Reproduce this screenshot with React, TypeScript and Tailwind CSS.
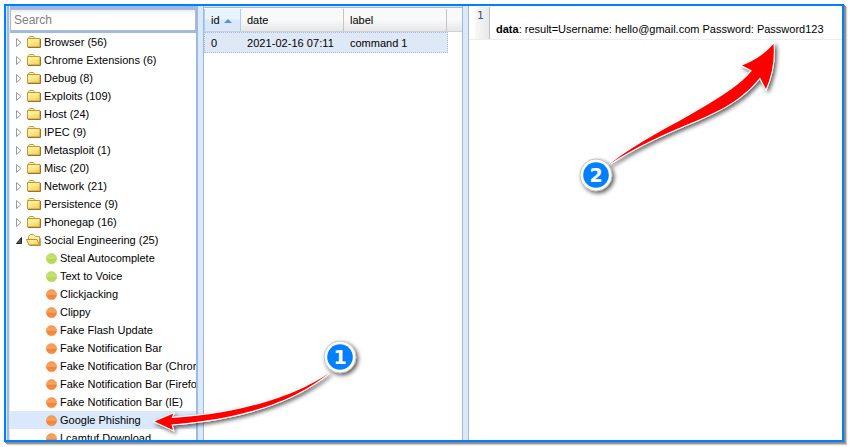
const folders = [
  "Browser (56)",
  "Chrome Extensions (6)",
  "Debug (8)",
  "Exploits (109)",
  "Host (24)",
  "IPEC (9)",
  "Metasploit (1)",
  "Misc (20)",
  "Network (21)",
  "Persistence (9)",
  "Phonegap (16)",
];

const modules = [
  { name: "Steal Autocomplete", safe: true },
  { name: "Text to Voice", safe: true },
  { name: "Clickjacking" },
  { name: "Clippy" },
  { name: "Fake Flash Update" },
  { name: "Fake Notification Bar" },
  { name: "Fake Notification Bar (Chrome)" },
  { name: "Fake Notification Bar (Firefox)" },
  { name: "Fake Notification Bar (IE)" },
  { name: "Google Phishing", selected: true },
  { name: "Lcamtuf Download" },
];

function Gradients() {
  return (
    <svg className="absolute h-0 w-0" aria-hidden="true">
      <defs>
        <linearGradient id="folder" x1="0" y1="0" x2="0.6" y2="1">
          <stop offset="0" stopColor="#fff6b4" />
          <stop offset="0.5" stopColor="#fdea90" />
          <stop offset="1" stopColor="#f8d158" />
        </linearGradient>
        <linearGradient id="green" x1="0" y1="0" x2="0" y2="1">
          <stop offset="0" stopColor="#b9da62" />
          <stop offset="0.45" stopColor="#c5e277" />
          <stop offset="0.6" stopColor="#b5d94c" />
          <stop offset="1" stopColor="#b8dc5c" />
        </linearGradient>
        <linearGradient id="orange" x1="0" y1="0" x2="0" y2="1">
          <stop offset="0" stopColor="#f5964c" />
          <stop offset="0.45" stopColor="#f9a466" />
          <stop offset="0.6" stopColor="#f38235" />
          <stop offset="1" stopColor="#f79145" />
        </linearGradient>
      </defs>
    </svg>
  );
}

function Folder({ open = false }: { open?: boolean }) {
  return (
    <svg width="16" height="18" viewBox="0 0 16 18" className="shrink-0">
      {open ? (
        <>
          <path d="M2.500 13V5.500l1.500-2h3.500l1.500 2h4.500v8z" fill="#fff3b0" stroke="#c99a2e" />
          <path d="M.5 8.500H11l2.500 5.500H3z" fill="url(#folder)" stroke="#c0902a" />
          <path d="M14.500 7v7.500h-11" fill="none" stroke="#8a6a2a" strokeWidth=".6" />
        </>
      ) : (
        <>
          <path d="M1.500 6V4.800l1-1.300h4l1 1.300V6z" fill="#fff3b0" stroke="#c99a2e" />
          <path d="M.5 5.500h12.500v8.500H.5z" fill="url(#folder)" stroke="#c9982a" />
          <path d="M13.500 6v8.500h-12.500" fill="none" stroke="#8a6c30" strokeWidth=".9" />
        </>
      )}
    </svg>
  );
}

function Tree() {
  return (
    <div className="min-h-0 flex-1 overflow-hidden bg-white">
      {folders.map((name) => (
        <div key={name} className="flex h-[18px] items-center whitespace-nowrap">
          <svg width="17" height="18" className="shrink-0">
            <path d="M6.500 5.500v8L11 9.500z" fill="#fff" stroke="#9b9b9b" />
          </svg>
          <Folder />
          <span className="pl-px">{name}</span>
        </div>
      ))}
      <div className="flex h-[18px] items-center whitespace-nowrap">
        <svg width="16" height="18" className="shrink-0">
          <path d="M11.500 6.500v6h-5z" fill="#555" stroke="#222" strokeLinejoin="round" />
        </svg>
        <Folder open />
        <span className="pl-[2px]">Social Engineering (25)</span>
      </div>
      {modules.map((m) => (
        <div
          key={m.name}
          className={`flex h-[18px] items-center whitespace-nowrap pl-[35px] ${m.selected ? "bg-[#d9e8fb]" : ""}`}
        >
          <svg width="13" height="18" className="shrink-0">
            <circle
              cx="6.500"
              cy="9.600"
              r="5.200"
              fill={m.safe ? "url(#green)" : "url(#orange)"}
              stroke={m.safe ? "#aacb50" : "#e98a45"}
              strokeWidth=".5"
            />
          </svg>
          <span className="pl-[2px]">{m.name}</span>
        </div>
      ))}
    </div>
  );
}

function ResultsGrid() {
  return (
    <section className="w-[260px] shrink-0 border-x border-[#99bbe8] bg-white">
      <div className="h-[2px] border-b border-[#99bbe8] bg-[#dfe8f6]" />
      <div className="flex h-6 border-b border-[#d0d0d0] bg-linear-to-b from-[#f9f9f9] from-50% to-[#e6e7e9]">
        <div className="mt-px flex w-[37px] items-center border-x border-[#aaccf6] bg-linear-to-b from-[#ebf3fd] from-45% to-[#d9e8fb] to-50% pl-[6px]">
          id
          <svg width="8" height="4" className="ml-[4px] mt-px">
            <path d="M0 4 4 0 8 4z" fill="#5e8fd0" />
          </svg>
        </div>
        <div className="mt-px flex w-[103px] items-center border-r border-[#c5c5c5] pl-[6px]">date</div>
        <div className="mt-px flex w-[103px] items-center border-r border-[#c5c5c5] pl-[6px]">label</div>
      </div>
      <div className="flex h-[21px] w-[244px] items-center border border-dotted border-[#a3bae9] bg-[#dfe8f6]">
        <span className="w-[36px] pl-[6px]">0</span>
        <span className="w-[103px] pl-[6px] tracking-[0.05px]">2021-02-16 07:11</span>
        <span className="pl-[6px]">command 1</span>
      </div>
    </section>
  );
}

function Badge({ x, y, value }: { x: number; y: number; value: string }) {
  return (
    <g>
      <circle cx={x} cy={y} r="16" fill="#fff" stroke="#aaa" strokeWidth=".7" filter="url(#shadow)" />
      <circle cx={x} cy={y} r="12.800" fill="#0080ff" />
      <text
        x={x}
        y={y + 7}
        textAnchor="middle"
        fill="#fff"
        className="font-['DejaVu_Sans',sans-serif] text-[19px] font-bold"
      >
        {value}
      </text>
    </g>
  );
}

function Annotations() {
  return (
    <svg width="849" height="447" className="pointer-events-none absolute inset-0">
      <defs>
        <filter id="shadow" x="-30%" y="-30%" width="170%" height="170%">
          <feDropShadow dx="2" dy="2" stdDeviation="1.900" floodColor="#000" floodOpacity=".65" />
        </filter>
      </defs>
      <g fill="#f00" stroke="#fff" strokeWidth="2" strokeLinejoin="miter" paintOrder="stroke" filter="url(#shadow)">
        <path d="M329 373C302 392 250 413 171.500 418L173.500 413.500 154.500 421.500 173 430 171.500 424.500C255 418 302 395.500 329 373Z" />
        <path d="M609 164.500C640 140 672 126 700 109C725 94 740 85 752 70.500L742 65.500Q761 58 773.500 44Q775.500 67 766 89L760 77.500C741 101 719 111 697 120.500C664 134 637 146 609 164.500Z" />
      </g>
      <Badge x={340} y={357} value="1" />
      <Badge x={596} y={175} value="2" />
    </svg>
  );
}

export default function App() {
  return (
    <div className="relative h-[447px] w-[849px] overflow-hidden bg-white p-1 font-['Liberation_Sans',Arial,sans-serif] text-[11px] leading-[18px] text-black">
      <Gradients />
      <main className="flex h-[438px] w-[840px] overflow-hidden border-2 border-[#0080ff] bg-[#dfe8f6] shadow-[1px_1px_0_#888,2px_2px_0_#999,3px_3px_1px_#ccc]">
        <aside className="ml-px flex w-[191px] shrink-0 flex-col border-x-[2px] border-[#99bbe8] pl-px">
          <div className="h-[27px] shrink-0 border-t-[3px] border-b-2 border-[#99bbe8]">
            <div className="flex h-[22px] items-center border border-[#b5b8c8] bg-linear-to-b from-[#eeeeee] via-white via-30% to-white pl-[3px] text-[12px] text-[#808080]">
              Search
            </div>
          </div>
          <Tree />
        </aside>
        <div className="w-[5px] shrink-0" />
        <ResultsGrid />
        <div className="w-[5px] shrink-0" />
        <section className="min-w-0 flex-1 border-l border-[#99bbe8] bg-white">
          <div className="flex h-[34px] border-b border-[#ededed]">
            <div className="mt-px ml-[6px] w-[15px] border-r border-[#c0c0c0] bg-linear-to-r from-[#f8f8f8] to-[#e9e9e9] pl-[2px] font-['DejaVu_Sans',sans-serif] text-[11px] leading-[18px] text-[#445566]">
              1
            </div>
            <p className="whitespace-nowrap pt-[14px] pl-[6px]">
              <b>data</b>: result=Username: hello@gmail.com Password: Password123
            </p>
          </div>
        </section>
      </main>
      <Annotations />
    </div>
  );
}
